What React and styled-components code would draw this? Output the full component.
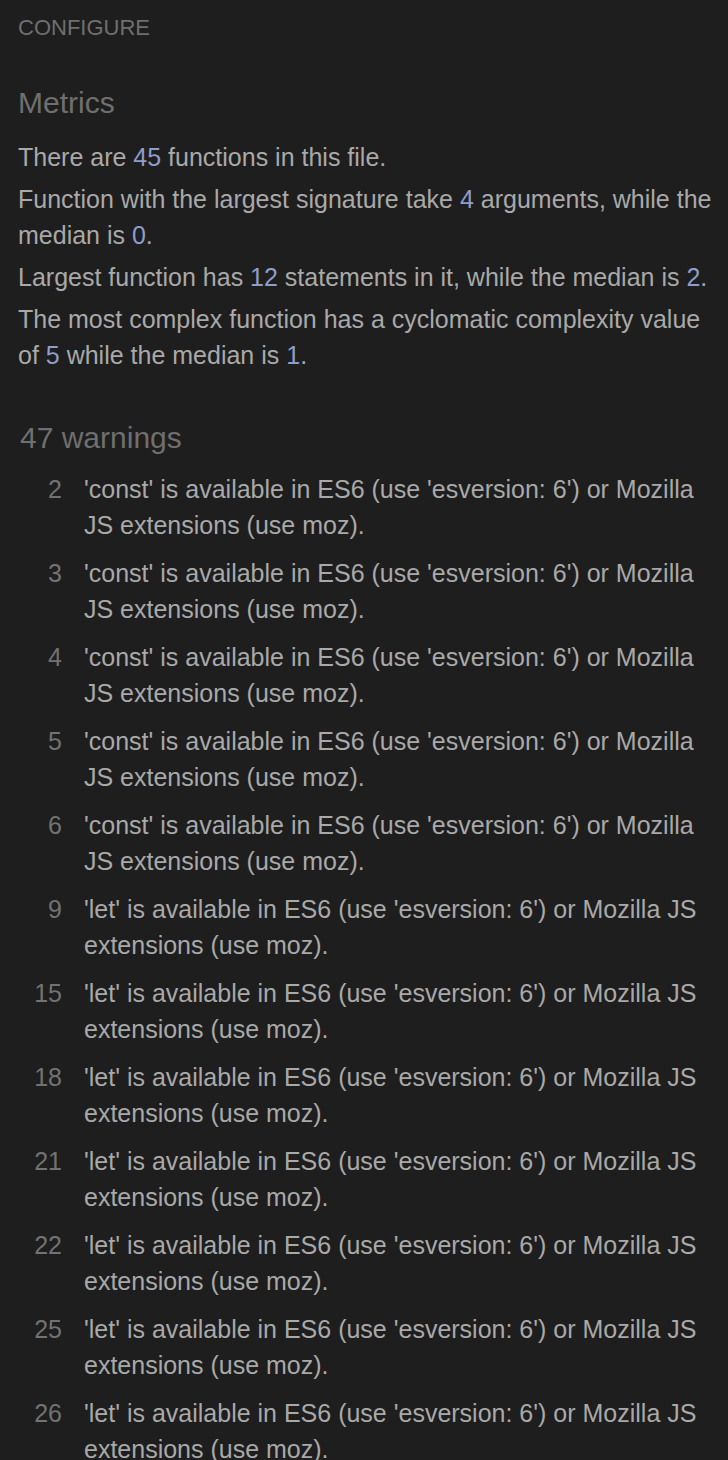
import styled, { createGlobalStyle } from 'styled-components'

const GlobalStyle = createGlobalStyle`
    html, body {
        margin: 0;
        padding: 0;
        background: #1e1e1e;
    }
    body {
        font-family: "Liberation Sans", Arial, sans-serif;
    }
`;

const Page = styled.div`
    width: 728px;
    height: 1460px;
    overflow: hidden;
    box-sizing: border-box;
    padding: 14px 8px 0 18px;
    background: #1e1e1e;
    color: #a9a9a9;
`;

const Configure = styled.div`
    font-size: 22px;
    line-height: 28px;
    color: #6f6f6f;
`;

const SectionTitle = styled.h2`
    margin: ${p => p.top || 0}px 0 0 ${p => p.indent || 0}px;
    font-size: 30px;
    line-height: 36px;
    font-weight: 400;
    color: #6f6f6f;
`;

const Metrics = styled.div`
    margin-top: 18px;
    display: flex;
    flex-direction: column;
    gap: 6px;
`;

const Line = styled.p`
    margin: 0;
    font-size: 25px;
    line-height: 36px;
`;

const Num = styled.span`
    color: #8e9dcc;
`;

const Warnings = styled.ol`
    list-style: none;
    margin: 15px 0 0;
    padding: 0;
    display: flex;
    flex-direction: column;
    gap: 12px;
`;

const Warning = styled.li`
    display: flex;
    gap: 22px;
    font-size: 25px;
    line-height: 36px;
`;

const LineNo = styled.span`
    flex: 0 0 44px;
    text-align: right;
    color: #727272;
`;

const Message = styled.span`
    flex: 1;
`;

const warnings = [
    [2, 'const'], [3, 'const'], [4, 'const'], [5, 'const'], [6, 'const'],
    [9, 'let'], [15, 'let'], [18, 'let'], [21, 'let'], [22, 'let'],
    [25, 'let'], [26, 'let'], [29, 'let'],
];

const App = () => {
  return (
    <>
    <GlobalStyle />
    <Page>
        <Configure>CONFIGURE</Configure>
        <SectionTitle top={43}>Metrics</SectionTitle>
        <Metrics>
            <Line>There are <Num>45</Num> functions in this file.</Line>
            <Line>Function with the largest signature take <Num>4</Num> arguments, while the median is <Num>0</Num>.</Line>
            <Line>Largest function has <Num>12</Num> statements in it, while the median is <Num>2</Num>.</Line>
            <Line>The most complex function has a cyclomatic complexity value of <Num>5</Num> while the median is <Num>1</Num>.</Line>
        </Metrics>
        <SectionTitle top={47} indent={2}>47 warnings</SectionTitle>
        <Warnings>
            {warnings.map(([line, kw]) => (
                <Warning key={line}>
                    <LineNo>{line}</LineNo>
                    <Message>'{kw}' is available in ES6 (use 'esversion: 6') or Mozilla JS extensions (use moz).</Message>
                </Warning>
            ))}
        </Warnings>
    </Page>
    </>
  )
}

export default App
